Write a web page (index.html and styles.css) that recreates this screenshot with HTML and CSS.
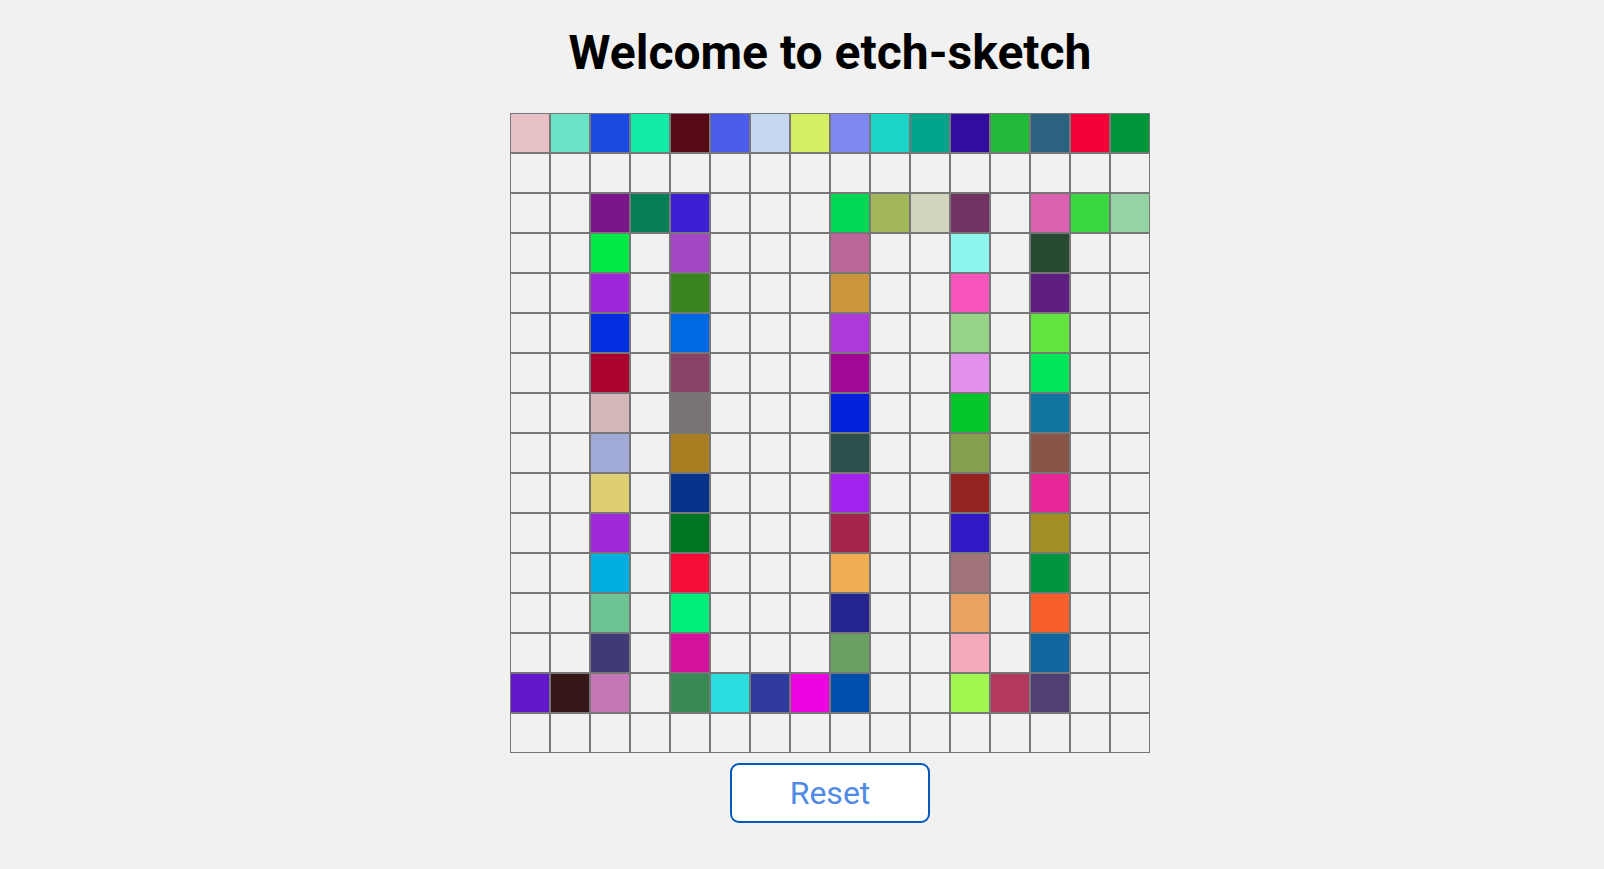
FILE: index.html
```html
<!DOCTYPE html>
<html lang="en">
<head>
<meta charset="utf-8">
<title>Etch-sketch</title>
<link rel="stylesheet" href="styles.css">
</head>
<body>
<main class="page">
  <h1 class="title">Welcome to etch-sketch</h1>
  <div class="grid">
    <div class="cell" style="background:#e6c0c4"></div><div class="cell" style="background:#6ae3c6"></div><div class="cell" style="background:#1b4ae3"></div><div class="cell" style="background:#12eca8"></div><div class="cell" style="background:#570a16"></div><div class="cell" style="background:#4b5ced"></div><div class="cell" style="background:#c5d8f0"></div><div class="cell" style="background:#d4ef62"></div><div class="cell" style="background:#7f88f2"></div><div class="cell" style="background:#1bd6c6"></div><div class="cell" style="background:#00a48a"></div><div class="cell" style="background:#320c9e"></div><div class="cell" style="background:#20b938"></div><div class="cell" style="background:#2c6180"></div><div class="cell" style="background:#f20037"></div><div class="cell" style="background:#00963a"></div>

    <div class="cell"></div><div class="cell"></div><div class="cell"></div><div class="cell"></div><div class="cell"></div><div class="cell"></div><div class="cell"></div><div class="cell"></div><div class="cell"></div><div class="cell"></div><div class="cell"></div><div class="cell"></div><div class="cell"></div><div class="cell"></div><div class="cell"></div><div class="cell"></div>

    <div class="cell"></div><div class="cell"></div><div class="cell" style="background:#7a1689"></div><div class="cell" style="background:#077e56"></div><div class="cell" style="background:#3c20d3"></div><div class="cell"></div><div class="cell"></div><div class="cell"></div><div class="cell" style="background:#00d854"></div><div class="cell" style="background:#a2b75a"></div><div class="cell" style="background:#d2d4be"></div><div class="cell" style="background:#723363"></div><div class="cell"></div><div class="cell" style="background:#dc61b1"></div><div class="cell" style="background:#39d840"></div><div class="cell" style="background:#94d4a4"></div>

    <div class="cell"></div><div class="cell"></div><div class="cell" style="background:#00eb45"></div><div class="cell"></div><div class="cell" style="background:#a347c4"></div><div class="cell"></div><div class="cell"></div><div class="cell"></div><div class="cell" style="background:#bc6699"></div><div class="cell"></div><div class="cell"></div><div class="cell" style="background:#8ef5ed"></div><div class="cell"></div><div class="cell" style="background:#264a32"></div><div class="cell"></div><div class="cell"></div>

    <div class="cell"></div><div class="cell"></div><div class="cell" style="background:#a026d9"></div><div class="cell"></div><div class="cell" style="background:#388520"></div><div class="cell"></div><div class="cell"></div><div class="cell"></div><div class="cell" style="background:#cb963a"></div><div class="cell"></div><div class="cell"></div><div class="cell" style="background:#f755bb"></div><div class="cell"></div><div class="cell" style="background:#5f1f80"></div><div class="cell"></div><div class="cell"></div>

    <div class="cell"></div><div class="cell"></div><div class="cell" style="background:#002ee0"></div><div class="cell"></div><div class="cell" style="background:#0068e3"></div><div class="cell"></div><div class="cell"></div><div class="cell"></div><div class="cell" style="background:#ae38d8"></div><div class="cell"></div><div class="cell"></div><div class="cell" style="background:#97d388"></div><div class="cell"></div><div class="cell" style="background:#63e43f"></div><div class="cell"></div><div class="cell"></div>

    <div class="cell"></div><div class="cell"></div><div class="cell" style="background:#aa022e"></div><div class="cell"></div><div class="cell" style="background:#884265"></div><div class="cell"></div><div class="cell"></div><div class="cell"></div><div class="cell" style="background:#a10896"></div><div class="cell"></div><div class="cell"></div><div class="cell" style="background:#e290eb"></div><div class="cell"></div><div class="cell" style="background:#00e85a"></div><div class="cell"></div><div class="cell"></div>

    <div class="cell"></div><div class="cell"></div><div class="cell" style="background:#d4b8b9"></div><div class="cell"></div><div class="cell" style="background:#797277"></div><div class="cell"></div><div class="cell"></div><div class="cell"></div><div class="cell" style="background:#0222de"></div><div class="cell"></div><div class="cell"></div><div class="cell" style="background:#00c62c"></div><div class="cell"></div><div class="cell" style="background:#10759f"></div><div class="cell"></div><div class="cell"></div>

    <div class="cell"></div><div class="cell"></div><div class="cell" style="background:#a1a9d7"></div><div class="cell"></div><div class="cell" style="background:#aa7d22"></div><div class="cell"></div><div class="cell"></div><div class="cell"></div><div class="cell" style="background:#2b4f4a"></div><div class="cell"></div><div class="cell"></div><div class="cell" style="background:#85a04c"></div><div class="cell"></div><div class="cell" style="background:#875646"></div><div class="cell"></div><div class="cell"></div>

    <div class="cell"></div><div class="cell"></div><div class="cell" style="background:#e0ce73"></div><div class="cell"></div><div class="cell" style="background:#06348a"></div><div class="cell"></div><div class="cell"></div><div class="cell"></div><div class="cell" style="background:#a322ee"></div><div class="cell"></div><div class="cell"></div><div class="cell" style="background:#952321"></div><div class="cell"></div><div class="cell" style="background:#e92697"></div><div class="cell"></div><div class="cell"></div>

    <div class="cell"></div><div class="cell"></div><div class="cell" style="background:#a02ad9"></div><div class="cell"></div><div class="cell" style="background:#007622"></div><div class="cell"></div><div class="cell"></div><div class="cell"></div><div class="cell" style="background:#a4264d"></div><div class="cell"></div><div class="cell"></div><div class="cell" style="background:#3119c6"></div><div class="cell"></div><div class="cell" style="background:#a38e24"></div><div class="cell"></div><div class="cell"></div>

    <div class="cell"></div><div class="cell"></div><div class="cell" style="background:#00afe1"></div><div class="cell"></div><div class="cell" style="background:#f50d35"></div><div class="cell"></div><div class="cell"></div><div class="cell"></div><div class="cell" style="background:#f0ad52"></div><div class="cell"></div><div class="cell"></div><div class="cell" style="background:#a1747a"></div><div class="cell"></div><div class="cell" style="background:#009540"></div><div class="cell"></div><div class="cell"></div>

    <div class="cell"></div><div class="cell"></div><div class="cell" style="background:#6cc495"></div><div class="cell"></div><div class="cell" style="background:#00ef78"></div><div class="cell"></div><div class="cell"></div><div class="cell"></div><div class="cell" style="background:#262590"></div><div class="cell"></div><div class="cell"></div><div class="cell" style="background:#e9a261"></div><div class="cell"></div><div class="cell" style="background:#f8602b"></div><div class="cell"></div><div class="cell"></div>

    <div class="cell"></div><div class="cell"></div><div class="cell" style="background:#403a76"></div><div class="cell"></div><div class="cell" style="background:#d3119c"></div><div class="cell"></div><div class="cell"></div><div class="cell"></div><div class="cell" style="background:#6ba063"></div><div class="cell"></div><div class="cell"></div><div class="cell" style="background:#f5a9bb"></div><div class="cell"></div><div class="cell" style="background:#11679f"></div><div class="cell"></div><div class="cell"></div>

    <div class="cell" style="background:#6318cb"></div><div class="cell" style="background:#361718"></div><div class="cell" style="background:#c576b6"></div><div class="cell"></div><div class="cell" style="background:#388953"></div><div class="cell" style="background:#2cdde0"></div><div class="cell" style="background:#2e3a9c"></div><div class="cell" style="background:#ec04e2"></div><div class="cell" style="background:#004fac"></div><div class="cell"></div><div class="cell"></div><div class="cell" style="background:#a1f650"></div><div class="cell" style="background:#b3395e"></div><div class="cell" style="background:#503f72"></div><div class="cell"></div><div class="cell"></div>

    <div class="cell"></div><div class="cell"></div><div class="cell"></div><div class="cell"></div><div class="cell"></div><div class="cell"></div><div class="cell"></div><div class="cell"></div><div class="cell"></div><div class="cell"></div><div class="cell"></div><div class="cell"></div><div class="cell"></div><div class="cell"></div><div class="cell"></div><div class="cell"></div>
  </div>
  <button class="reset" type="button">Reset</button>
</main>
</body>
</html>
```

FILE: styles.css
```css
html, body {
  margin: 0;
  padding: 0;
  background: #f1f1f1;
}

body {
  font-family: Roboto, "Liberation Sans", Arial, sans-serif;
}

.page {
  display: flex;
  flex-direction: column;
  align-items: center;
  padding-left: 56px;
}

.title {
  margin: 23px 0 31px;
  font-size: 48px;
  line-height: 59px;
  font-weight: 700;
  color: #000;
}

.grid {
  display: grid;
  grid-template-columns: repeat(16, 40px);
  grid-auto-rows: 40px;
  width: 640px;
}

.cell {
  box-sizing: border-box;
  border: 1px solid #777777;
  background: #f1f1f1;
}

.reset {
  box-sizing: border-box;
  margin-top: 10px;
  width: 200px;
  height: 60px;
  background: #ffffff;
  border: 2px solid #0057c0;
  border-radius: 9px;
  font-family: Roboto, "Liberation Sans", Arial, sans-serif;
  font-size: 32px;
  color: #4f8ae3;
  cursor: pointer;
}
```
